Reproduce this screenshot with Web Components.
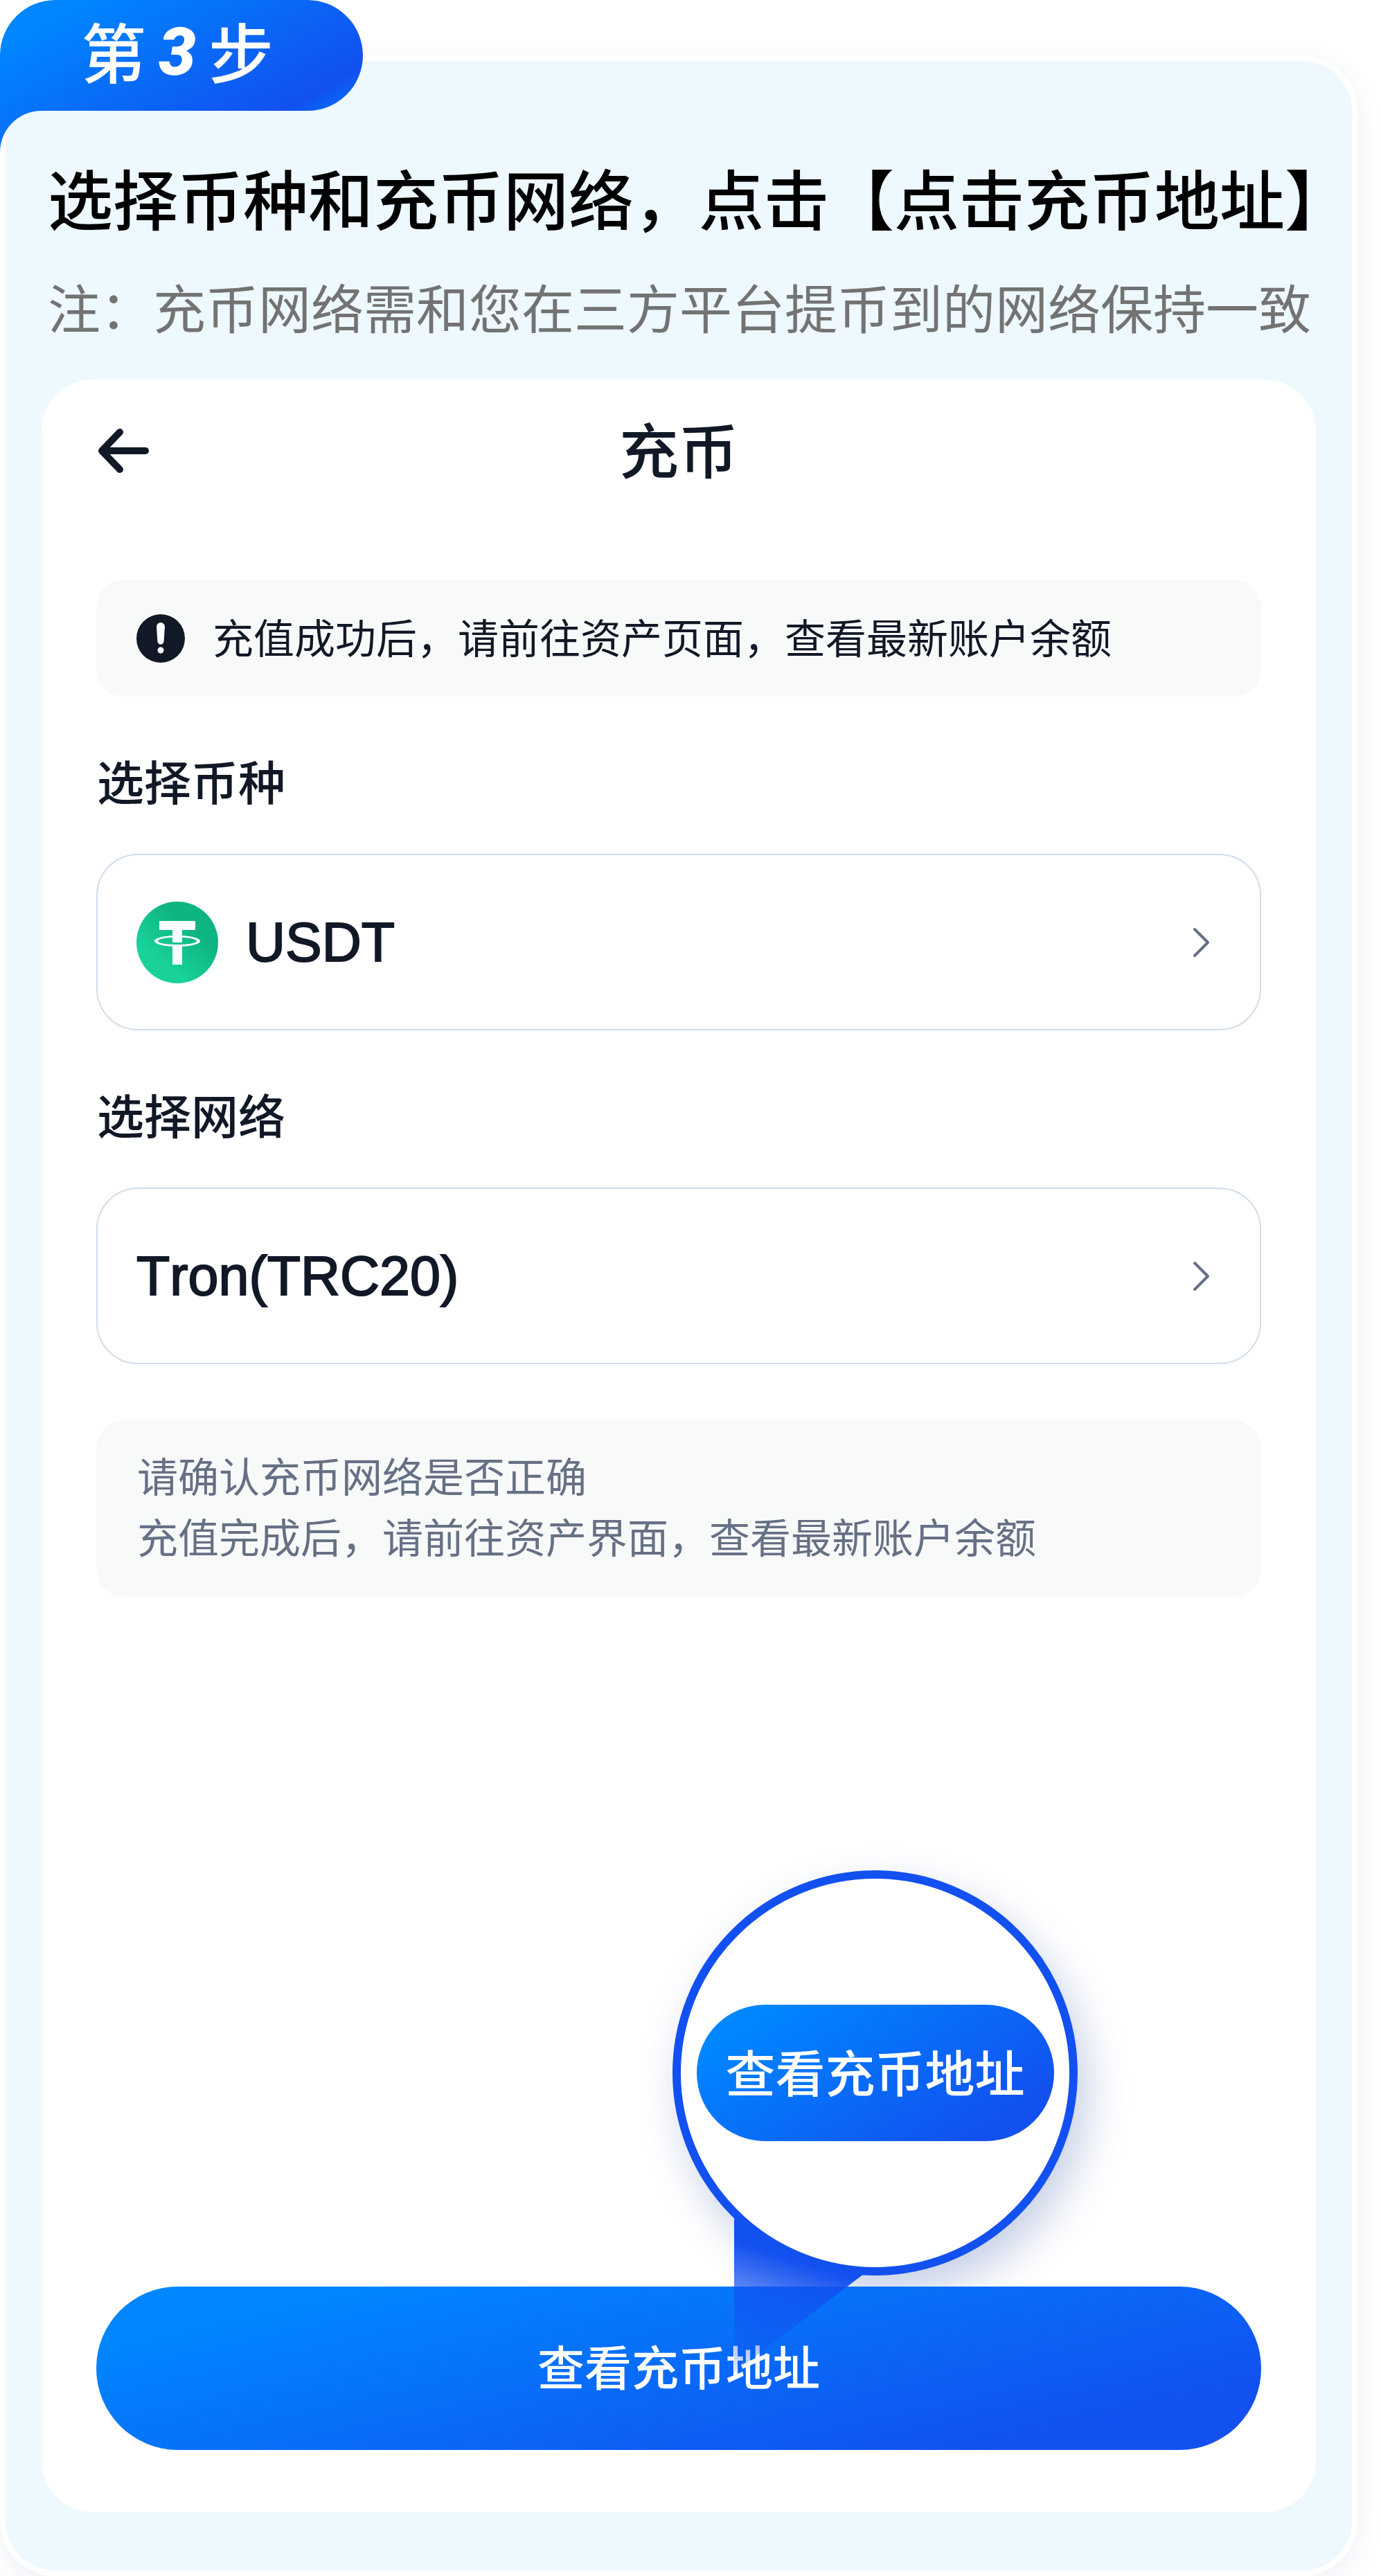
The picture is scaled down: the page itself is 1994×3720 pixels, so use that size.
<!DOCTYPE html>
<html lang="zh-CN">
<head>
<meta charset="utf-8">
<meta name="viewport" content="width=device-width, initial-scale=1">
<title>充币</title>
<style>
  body {
    margin: 0;
    background: #fff;
    color: #111826;
    font-family: "Noto Sans CJK SC", "Liberation Sans", sans-serif;
  }
</style>
</head>
<body>
<step-card>
  <step-badge slot="badge" step="3"></step-badge>
  <span slot="title">选择币种和充币网络，点击【点击充币地址】</span>
  <span slot="note">注：充币网络需和您在三方平台提币到的网络保持一致</span>
  <deposit-screen heading="充币">
    <notice-bar>充值成功后，请前往资产页面，查看最新账户余额</notice-bar>
    <picker-field label="选择币种"><usdt-icon slot="icon"></usdt-icon>USDT</picker-field>
    <picker-field label="选择网络">Tron(TRC20)</picker-field>
    <info-box>
      <p>请确认充币网络是否正确</p>
      <p>充值完成后，请前往资产界面，查看最新账户余额</p>
    </info-box>
    <magnified-action slot="action" label="查看充币地址"></magnified-action>
  </deposit-screen>
</step-card>

<script>
const define = (name, markup, setup) => {
  const template = document.createElement('template');
  template.innerHTML = markup;
  customElements.define(name, class extends HTMLElement {
    connectedCallback() {
      if (this.shadowRoot) return;
      const root = this.attachShadow({ mode: 'open' });
      root.append(template.content.cloneNode(true));
      if (setup) setup(this, root);
    }
  });
};

define('step-card', `
<style>
  :host { display: block; position: relative; box-sizing: border-box; min-height: 100vh; padding: 80px 34px 0 0; }
  ::slotted([slot="badge"]) { position: absolute; top: 0; left: 0; }
  article {
    box-sizing: border-box; min-height: calc(100vh - 80px);
    display: flex; flex-direction: column;
    padding: 136px 52px 84px; border: 8px solid #fff; border-radius: 80px;
    background: #edf8ff; background-clip: padding-box;
    box-shadow: 0 10px 40px rgba(40, 70, 140, .08);
  }
  header { padding: 0 9px; margin-right: -52px; }
  h1, p { margin: 0; white-space: nowrap; }
  h1 { color: #000; font-size: 94px; line-height: 120px; font-weight: 500; }
  p { margin-top: 48px; color: #737373; font-size: 76px; line-height: 100px; }
  ::slotted(deposit-screen) { flex: 1; margin-top: 56px; }
</style>
<slot name="badge"></slot>
<article>
  <header>
    <h1><slot name="title"></slot></h1>
    <p><slot name="note"></slot></p>
  </header>
  <slot></slot>
</article>`);

define('step-badge', `
<style>
  :host { display: block; }
  .shape { display: block; width: 524px; height: 220px; }
  .text {
    position: absolute; top: 0; left: 0; width: 524px; height: 160px; box-sizing: border-box;
    padding: 0 12px 16px 0;
    display: flex; align-items: center; justify-content: center; gap: 18px;
    color: #fff; font-size: 94px; line-height: 120px; font-weight: 500;
  }
  b { font-family: Roboto, "Liberation Sans", sans-serif; font-style: italic; font-weight: 900; font-size: 96px; padding-top: 6px; }
</style>
<svg class="shape" viewBox="0 0 524 220" aria-hidden="true">
  <defs>
    <linearGradient id="g" gradientUnits="userSpaceOnUse" x1="30" y1="0" x2="256" y2="391">
      <stop offset=".1" stop-color="#0086ff"/>
      <stop offset=".73" stop-color="#1250f0"/>
      <stop offset=".86" stop-color="#0578fb"/>
    </linearGradient>
  </defs>
  <path fill="url(#g)" d="M80 0H444A80 80 0 0 1 444 160H60A60 60 0 0 0 0 220V80A80 80 0 0 1 80 0Z"/>
</svg>
<div class="text"><span>第</span><b></b><span>步</span></div>`,
(host, root) => { root.querySelector('b').textContent = host.getAttribute('step'); });

define('deposit-screen', `
<style>
  :host {
    display: flex; flex-direction: column; box-sizing: border-box;
    padding: 43px 79px 90px; border-radius: 74px; background: #fff;
  }
  header { display: grid; grid-template-columns: 80px 1fr 80px; align-items: center; height: 120px; margin-bottom: 46px; }
  button { display: block; margin: 0; padding: 0; border: 0; background: none; width: 80px; height: 80px; }
  svg { display: block; width: 80px; height: 80px; }
  h2 { margin: 0; text-align: center; font-size: 86px; line-height: 110px; font-weight: 500; padding-bottom: 8px; }
  main { display: flex; flex-direction: column; gap: 81px; padding-top: 80px; }
  footer { margin-top: auto; padding-top: 80px; }
</style>
<header>
  <button type="button" aria-label="返回">
    <svg viewBox="0 0 80 80" fill="none" stroke="#111826" stroke-width="10" stroke-linecap="round" stroke-linejoin="round">
      <path d="M34 13 8 40 34 67M8 40H71"/>
    </svg>
  </button>
  <h2></h2>
</header>
<main><slot></slot></main>
<footer><slot name="action"></slot></footer>`,
(host, root) => { root.querySelector('h2').textContent = host.getAttribute('heading'); });

define('notice-bar', `
<style>
  :host {
    display: flex; align-items: center; gap: 40px; box-sizing: border-box; height: 169px;
    padding: 0 58px; border-radius: 40px; background: #f8fafa;
  }
  svg { flex: none; width: 70px; height: 70px; }
  span { font-size: 59px; line-height: 80px; white-space: nowrap; padding-bottom: 6px; }
</style>
<svg viewBox="0 0 70 70" aria-hidden="true">
  <circle cx="35" cy="35" r="35" fill="#111826"/>
  <path fill="#fff" d="M29 18a6 6 0 0 1 12 0L39.600 39a4.600 4.600 0 0 1-9.200 0Z"/>
  <circle cx="35" cy="52" r="4.500" fill="#fff"/>
</svg>
<span><slot></slot></span>`);

define('picker-field', `
<style>
  :host { display: flex; flex-direction: column; gap: 66px; }
  label { font-size: 68px; line-height: 80px; font-weight: 500; margin-left: 1px; }
  button {
    display: flex; align-items: center; gap: 40px; box-sizing: border-box; width: 100%; height: 255px;
    margin: 0; padding: 0 56px; border: 2px solid #d1ddec; border-radius: 60px; background: #fff;
    color: #111826; font-family: "Liberation Sans", sans-serif; font-size: 79px; line-height: 100px; text-align: left;
    font-kerning: none;
  }
  .value { flex: 1; -webkit-text-stroke: 2px #111826; }
  svg { flex: none; width: 60px; height: 60px; }
</style>
<label for="picker"></label>
<button type="button" id="picker">
  <slot name="icon"></slot>
  <span class="value"><slot></slot></span>
  <svg viewBox="0 0 60 60" fill="none" stroke="#667085" stroke-width="4" stroke-linecap="round" stroke-linejoin="round" aria-hidden="true">
    <path d="M22 11 41 30 22 49"/>
  </svg>
</button>`,
(host, root) => { root.querySelector('label').textContent = host.getAttribute('label'); });

define('usdt-icon', `
<style>
  :host { display: block; flex: none; width: 118px; height: 118px; }
  svg { display: block; width: 100%; height: 100%; }
</style>
<svg viewBox="0 0 118 118" aria-hidden="true">
  <defs>
    <linearGradient id="g" x1=".75" y1=".2" x2=".25" y2=".8">
      <stop offset=".2" stop-color="#0eb583"/>
      <stop offset=".9" stop-color="#1ad19a"/>
    </linearGradient>
  </defs>
  <circle cx="59" cy="59" r="59" fill="url(#g)"/>
  <path fill="#fff" d="M33 28H85V41H66V58.500Q59 59.500 52 58.500V41H33Z"/>
  <path fill="#fff" fill-rule="evenodd" d="M59 49c18 0 33 3.500 33 8s-15 8-33 8-33-3.500-33-8 15-8 33-8Zm0 2.500c-15 0-28 2.400-28 5.500s13 5 28 5 28-2 28-5-13-5.500-28-5.500Z"/>
  <path fill="#fff" d="M52 41H66V58.500Q59 59.500 52 58.500ZM52 63H66V91H52Z"/>
</svg>`);

define('info-box', `
<style>
  :host {
    display: block; padding: 35px 59px 44px; border-radius: 40px; background: #f8fafa;
    color: #667085; font-size: 59px; line-height: 88px;
  }
  ::slotted(p) { margin: 0; }
</style>
<slot></slot>`);

define('magnified-action', `
<style>
  :host { display: block; position: relative; }
  button { display: block; margin: 0; border: 0; color: #fff; font-family: inherit; font-weight: 500; white-space: nowrap; }
  .full {
    position: relative; width: 100%; height: 236px; padding: 0 0 8px; border-radius: 118px; font-size: 68px; line-height: 90px;
    background: linear-gradient(167deg, #0086ff 14%, #1250f0 86%);
  }
  .lens {
    position: absolute; left: calc(50% - 9px); bottom: calc(100% + 16px);
    box-sizing: border-box; width: 585px; height: 585px;
  }
  .halo { border-radius: 50%; box-shadow: 14px 26px 60px rgba(30, 70, 160, .26); }
  .ring {
    position: absolute; inset: 0; box-sizing: border-box; border: 12px solid #1250f0; border-radius: 50%;
    background: #fff; display: flex; align-items: center; justify-content: center;
  }
  .tail { position: absolute; left: 89px; top: 485px; width: 187px; height: 242px; }
  .zoomed {
    width: 516px; height: 197px; padding: 0 0 8px; border-radius: 99px; font-size: 72px; line-height: 90px;
    background: linear-gradient(147deg, #0086ff 14%, #1250f0 86%);
  }
</style>
<div class="lens halo"></div>
<button type="button" class="full"></button>
<div class="lens">
  <svg class="tail" viewBox="0 0 187 242" aria-hidden="true">
    <defs>
      <linearGradient id="t" gradientUnits="userSpaceOnUse" x1="-14" y1="44" x2="-77" y2="243">
        <stop offset="0" stop-color="#1250f0"/>
        <stop offset="1" stop-color="#1250f0" stop-opacity="0"/>
      </linearGradient>
    </defs>
    <path fill="url(#t)" d="M0 0H187V98L0 240Z"/>
  </svg>
  <div class="ring"><button type="button" class="zoomed"></button></div>
</div>`,
(host, root) => root.querySelectorAll('button').forEach(b => { b.textContent = host.getAttribute('label'); }));
</script>
</body>
</html>
